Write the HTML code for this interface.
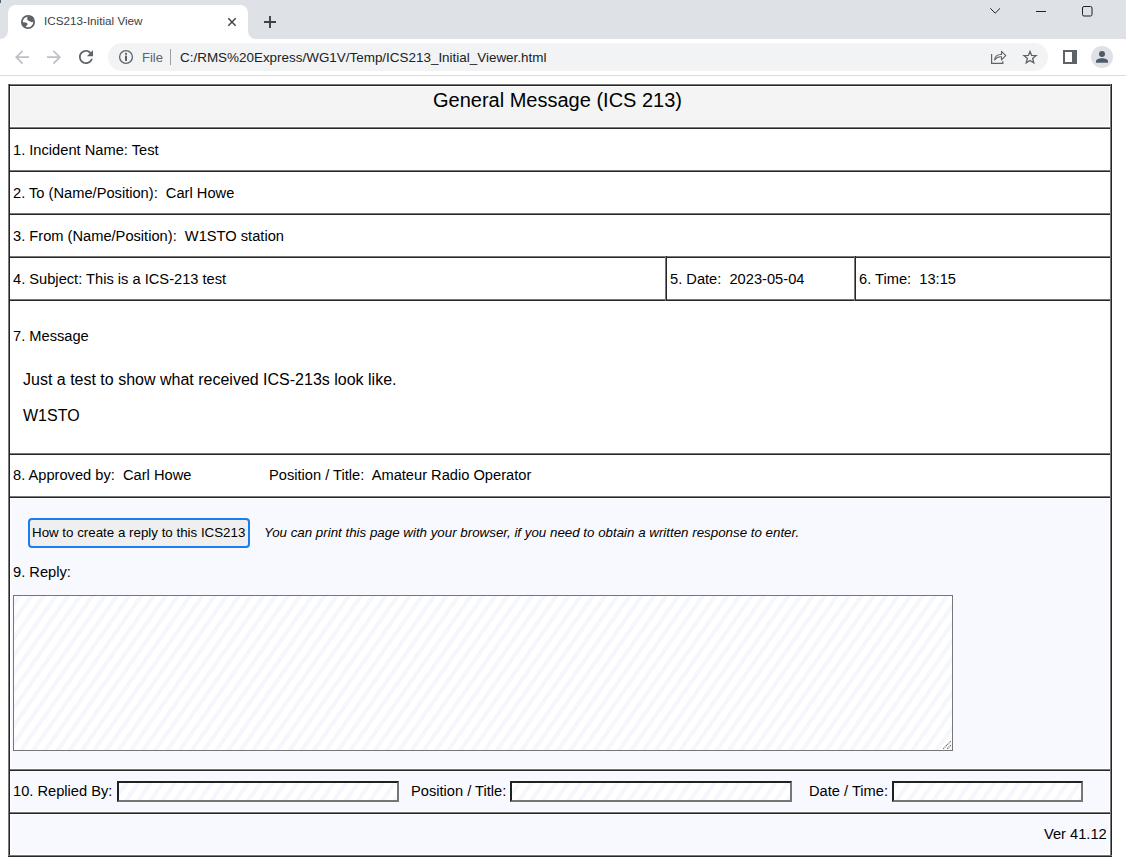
<!DOCTYPE html>
<html><head><meta charset="utf-8"><title>ICS213-Initial View</title>
<style>
html,body{margin:0;padding:0;width:1126px;height:863px;overflow:hidden;background:#fff;font-family:"Liberation Sans",sans-serif;color:#000;}
.a{position:absolute;}
.t{position:absolute;white-space:pre;line-height:1;}
#tabbar{left:0;top:0;width:1126px;height:39px;background:#dee1e6;}
#tab{left:8px;top:5px;width:240px;height:33px;background:#fff;border-radius:8px 8px 0 0;}
#toolbar{left:0;top:39px;width:1126px;height:36px;background:#fff;}
#tline{left:0;top:75px;width:1126px;height:1px;background:#dadce0;}
#omni{left:108px;top:43px;width:940px;height:28px;background:#f1f3f4;border-radius:14px;}
.hb{position:absolute;height:1px;border-top:1px solid #7a7a7a;background:#262626;left:8px;width:1104px;}
.vb{position:absolute;width:1px;border-left:1px solid #7a7a7a;background:#262626;}
.lbl{font-size:14.667px;}
.stripe{background-color:#fff;background-image:repeating-linear-gradient(125deg,#f6f7fd 0px,#f6f7fd 4.2px,#fff 4.2px,#fff 10px);}
.s1{background-image:repeating-linear-gradient(125deg,#fff 0px,#fff 3.8px,#f6f7fd 3.8px,#f6f7fd 8px,#fff 8px,#fff 10px);}
.s3{background-image:repeating-linear-gradient(125deg,#fff 0px,#fff 0.1px,#f6f7fd 0.1px,#f6f7fd 4.3px,#fff 4.3px,#fff 10px);}
.sta{background-image:repeating-linear-gradient(125deg,#fff 0px,#fff 2.1px,#f6f7fd 2.1px,#f6f7fd 6.3px,#fff 6.3px,#fff 10px);}
</style></head><body>
<!-- Chrome UI -->
<div id="tabbar" class="a"></div>
<div id="toolbar" class="a"></div>
<div id="tline" class="a"></div>
<div class="a" style="left:0;top:0;width:1px;height:3px;background:#4a6272;"></div>
<div id="omni" class="a"></div>
<svg class="a" style="left:0;top:0" width="1126" height="76" viewBox="0 0 1126 76">
<path d="M0,39 A8,8 0 0 0 8,31 L8,13 A8,8 0 0 1 16,5 L240,5 A8,8 0 0 1 248,13 L248,31 A8,8 0 0 0 256,39 Z" fill="#fff"/>
<!-- globe -->
<g fill="#5f6368">
<circle cx="28" cy="22" r="6.1" fill="none" stroke="#5f6368" stroke-width="1.8"/>
<path d="M29,15.6 C27.6,16.6 27,18 27.2,19.2 C27.5,20.2 28.6,20.9 29.8,21.2 C30.6,21.6 31,22.1 31.4,22.2 L34.2,21.4 L34,18 L32,16 Z"/>
<path d="M21.8,22 L25.5,22.4 C26.8,22.8 27.8,23.5 27.6,24.4 C27.2,25 26.4,25.6 25.8,26.2 L25.6,28 L23,26.5 L21.8,24 Z"/>
</g>
<!-- close x -->
<path d="M228.3,18.3 L235.7,25.7 M235.7,18.3 L228.3,25.7" stroke="#3c4043" stroke-width="1.4" fill="none"/>
<!-- plus -->
<path d="M264,22 L276,22 M270,16 L270,28" stroke="#3c4043" stroke-width="1.9" fill="none"/>
<!-- window controls -->
<path d="M990.3,8.3 L995.2,13.2 L1000.1,8.3" stroke="#202124" stroke-width="1" fill="none"/>
<path d="M1036,11.5 L1046,11.5" stroke="#202124" stroke-width="1" fill="none"/>
<rect x="1082.5" y="6.5" width="9.5" height="9.5" rx="1.5" stroke="#202124" stroke-width="1" fill="none"/>
<!-- back / fwd -->
<path transform="translate(22,57.2) scale(0.875) translate(-12,-12)" d="M20 11H7.83l5.59-5.59L12 4l-8 8 8 8 1.41-1.41L7.83 13H20v-2z" fill="#bdc1c6"/>
<path transform="translate(54,57.2) scale(-0.875,0.875) translate(-12,-12)" d="M20 11H7.83l5.59-5.59L12 4l-8 8 8 8 1.41-1.41L7.83 13H20v-2z" fill="#bdc1c6"/>
<path transform="translate(86,57.1) scale(0.875) translate(-12,-12)" d="M17.65 6.35C16.2 4.9 14.21 4 12 4c-4.42 0-7.99 3.58-7.99 8s3.57 8 7.99 8c3.73 0 6.84-2.55 7.73-6h-2.08c-.82 2.33-3.04 4-5.65 4-3.31 0-6-2.69-6-6s2.69-6 6-6c1.66 0 3.14.69 4.22 1.78L13 11h7V4l-2.35 2.35z" fill="#5f6368"/>
<!-- info -->
<circle cx="126" cy="57" r="6.4" fill="none" stroke="#5f6368" stroke-width="1.3"/>
<rect x="125.1" y="52.9" width="1.8" height="1.8" fill="#4a4e52"/>
<rect x="125.1" y="55.6" width="1.8" height="5.3" fill="#4a4e52"/>
<rect x="170" y="49" width="1" height="16" fill="#9aa0a6"/>
<!-- share -->
<path d="M991.6,54 L991.6,63.4 L1002.8,63.4 L1002.8,61.3" stroke="#5f6368" stroke-width="1.2" fill="none"/>
<path d="M994.5,60 C995,56 998,54.3 1001.5,54.5 L1001.5,51.3 L1005.8,55.6 L1001.5,59.8 L1001.5,56.8 C998.5,56.6 996.3,57.6 994.5,60 Z" stroke="#5f6368" stroke-width="1.1" fill="none" stroke-linejoin="round"/>
<!-- star -->
<path transform="translate(1030,57.4) scale(0.94)" d="M0,-6.3 L1.75,-2.1 L6.4,-1.9 L2.8,1.1 L4,5.8 L0,3.3 L-4,5.8 L-2.8,1.1 L-6.4,-1.9 L-1.75,-2.1 Z" stroke="#5f6368" stroke-width="1.4" fill="none" stroke-linejoin="miter"/>
<!-- side panel -->
<rect x="1064" y="51" width="12" height="12" stroke="#5f6368" stroke-width="2" fill="none"/>
<rect x="1072" y="51" width="4" height="12" fill="#5f6368"/>
<!-- profile -->
<circle cx="1102" cy="57" r="11" fill="#dfe1e5"/>
<circle cx="1102" cy="53.9" r="3" fill="#4f5b6b"/>
<path d="M1096,62.8 L1096,61 C1096,59.3 1099,58.2 1102,58.2 C1105,58.2 1108,59.3 1108,61 L1108,62.8 Z" fill="#4f5b6b"/>
</svg>
<div class="t" style="left:44px;top:15px;font-size:11.7px;color:#3c4043;">ICS213-Initial View</div>
<div class="t" style="left:142px;top:50.5px;font-size:13px;color:#5f6368;">File</div>
<div class="t" style="left:180px;top:50.5px;font-size:13.45px;color:#202124;">C:/RMS%20Express/WG1V/Temp/ICS213_Initial_Viewer.html</div>

<!-- Page -->
<div class="a" style="left:10px;top:86px;width:1100px;height:41px;background:#f4f4f4;border:1px solid #fff;box-sizing:border-box;"></div>
<div class="a" style="left:11px;top:499px;width:1098px;height:269px;background:#f8f8ff;"></div>
<div class="a" style="left:11px;top:772px;width:1098px;height:39px;background:#f8f8ff;"></div>
<div class="a" style="left:11px;top:815px;width:1098px;height:39px;background:#f8f8ff;"></div>
<div class="hb" style="top:84px;"></div>
<div class="hb" style="top:127px;"></div>
<div class="hb" style="top:170px;"></div>
<div class="hb" style="top:213px;"></div>
<div class="hb" style="top:256px;"></div>
<div class="hb" style="top:299px;"></div>
<div class="hb" style="top:453px;"></div>
<div class="hb" style="top:496px;"></div>
<div class="hb" style="top:769px;"></div>
<div class="hb" style="top:812px;"></div>
<div class="hb" style="top:855px;"></div>
<div class="vb" style="left:8px;top:84px;height:771px;"></div>
<div class="vb" style="left:1110px;top:84px;height:771px;"></div>
<div class="vb" style="left:665px;top:256px;height:45px;"></div>
<div class="vb" style="left:854px;top:256px;height:45px;"></div>

<div class="t" style="left:433px;top:90px;font-size:20px;">General Message (ICS 213)</div>
<div class="t lbl" style="left:13px;top:143px;">1. Incident Name: Test</div>
<div class="t lbl" style="left:13px;top:186px;">2. To (Name/Position):&nbsp; Carl Howe</div>
<div class="t lbl" style="left:13px;top:229px;">3. From (Name/Position):&nbsp; W1STO station</div>
<div class="t lbl" style="left:13px;top:272px;">4. Subject: This is a ICS-213 test</div>
<div class="t lbl" style="left:670px;top:272px;">5. Date:&nbsp; 2023-05-04</div>
<div class="t lbl" style="left:859px;top:272px;">6. Time:&nbsp; 13:15</div>
<div class="t lbl" style="left:13px;top:329px;">7. Message</div>
<div class="t" style="left:23px;top:372px;font-size:16px;">Just a test to show what received ICS-213s look like.</div>
<div class="t" style="left:23px;top:408px;font-size:16px;">W1STO</div>
<div class="t lbl" style="left:13px;top:468px;">8. Approved by:&nbsp; Carl Howe</div>
<div class="t lbl" style="left:269px;top:468px;">Position / Title:&nbsp; Amateur Radio Operator</div>

<!-- reply -->
<div class="a" style="left:28px;top:518px;width:222px;height:30px;box-sizing:border-box;border:2px solid #1a7ef2;border-radius:4px;background:#efefef;"></div>
<div class="t" style="left:32px;top:526px;font-size:13.333px;">How to create a reply to this ICS213</div>
<div class="t" style="left:264px;top:526px;font-size:13.333px;font-style:italic;">You can print this page with your browser, if you need to obtain a written response to enter.</div>
<div class="t lbl" style="left:13px;top:565px;">9. Reply:</div>
<div class="a stripe sta" style="left:13px;top:595px;width:940px;height:156px;box-sizing:border-box;border:1px solid #767676;"></div>

<svg class="a" style="left:940px;top:738px" width="12" height="12" viewBox="0 0 12 12"><path d="M3.2,10.8 L10.8,3.2 M7.2,10.8 L10.8,7.2" stroke="#6e6e6e" stroke-width="1.15" stroke-dasharray="1.2 0.7" fill="none"/></svg>
<div class="t lbl" style="left:13px;top:784px;">10. Replied By:</div>
<div class="a stripe s1" style="left:117px;top:781px;width:282px;height:21px;box-sizing:border-box;border:2px inset #767676;"></div>
<div class="t lbl" style="left:411px;top:784px;">Position / Title:</div>
<div class="a stripe s1" style="left:510px;top:781px;width:282px;height:21px;box-sizing:border-box;border:2px inset #767676;"></div>
<div class="t lbl" style="left:809px;top:784px;">Date / Time:</div>
<div class="a stripe s3" style="left:892px;top:781px;width:191px;height:21px;box-sizing:border-box;border:2px inset #767676;"></div>
<div class="t lbl" style="left:1044px;top:827px;">Ver 41.12</div>
</body></html>
